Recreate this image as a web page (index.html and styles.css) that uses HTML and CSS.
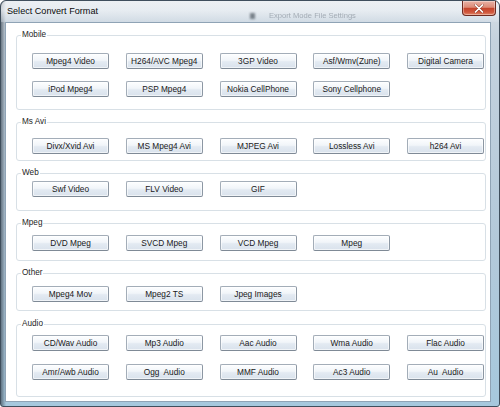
FILE: index.html
```html
<!DOCTYPE html>
<html>
<head>
<meta charset="utf-8">
<title>Select Convert Format</title>
<link rel="stylesheet" href="styles.css">
</head>
<body>
<div class="window">
  <div class="titlebar">
    <span class="title">Select Convert Format</span>
    <span class="ghost-icon"></span>
    <span class="ghost">Export Mode File Settings</span>
    <button class="close" aria-label="Close">
      <svg width="14" height="9" viewBox="0 0 14 9"><path d="M3.5 1 L10.5 8 M10.5 1 L3.5 8" stroke="#5a1c12" stroke-width="2.6" stroke-linecap="round" opacity=".5"/><path d="M3.5 1 L10.5 8 M10.5 1 L3.5 8" stroke="#ffffff" stroke-width="1.7" stroke-linecap="round"/></svg>
    </button>
  </div>
  <div class="client">
    <fieldset class="group g-mobile">
      <legend>Mobile</legend>
      <div class="grid">
        <button class="btn">Mpeg4 Video</button>
        <button class="btn">H264/AVC Mpeg4</button>
        <button class="btn">3GP Video</button>
        <button class="btn">Asf/Wmv(Zune)</button>
        <button class="btn">Digital Camera</button>
        <button class="btn">iPod Mpeg4</button>
        <button class="btn">PSP Mpeg4</button>
        <button class="btn">Nokia CellPhone</button>
        <button class="btn">Sony Cellphone</button>
      </div>
    </fieldset>
    <fieldset class="group g-msavi">
      <legend>Ms Avi</legend>
      <div class="grid">
        <button class="btn">Divx/Xvid Avi</button>
        <button class="btn">MS Mpeg4 Avi</button>
        <button class="btn">MJPEG Avi</button>
        <button class="btn">Lossless Avi</button>
        <button class="btn">h264 Avi</button>
      </div>
    </fieldset>
    <fieldset class="group g-web">
      <legend>Web</legend>
      <div class="grid">
        <button class="btn">Swf Video</button>
        <button class="btn">FLV Video</button>
        <button class="btn">GIF</button>
      </div>
    </fieldset>
    <fieldset class="group g-mpeg">
      <legend>Mpeg</legend>
      <div class="grid">
        <button class="btn">DVD Mpeg</button>
        <button class="btn">SVCD Mpeg</button>
        <button class="btn">VCD Mpeg</button>
        <button class="btn">Mpeg</button>
      </div>
    </fieldset>
    <fieldset class="group g-other">
      <legend>Other</legend>
      <div class="grid">
        <button class="btn">Mpeg4 Mov</button>
        <button class="btn">Mpeg2 TS</button>
        <button class="btn">Jpeg Images</button>
      </div>
    </fieldset>
    <fieldset class="group g-audio">
      <legend>Audio</legend>
      <div class="grid">
        <button class="btn">CD/Wav Audio</button>
        <button class="btn">Mp3 Audio</button>
        <button class="btn">Aac Audio</button>
        <button class="btn">Wma Audio</button>
        <button class="btn">Flac Audio</button>
        <button class="btn">Amr/Awb Audio</button>
        <button class="btn">Ogg&nbsp; Audio</button>
        <button class="btn">MMF Audio</button>
        <button class="btn">Ac3 Audio</button>
        <button class="btn">Au&nbsp; Audio</button>
      </div>
    </fieldset>
  </div>
</div>
</body>
</html>
```

FILE: styles.css
```css
* { box-sizing: border-box; }

html, body {
  margin: 0;
  padding: 0;
  width: 500px;
  height: 407px;
  overflow: hidden;
  background: #ffffff;
  font-family: "Liberation Sans", Arial, sans-serif;
}

.window {
  width: 500px;
  height: 407px;
  display: flex;
  flex-direction: column;
  border: 1px solid #3f4e5c;
  border-radius: 6px 6px 3px 3px;
  background:
    linear-gradient(90deg, rgba(60,72,84,.65) 0px, rgba(60,72,84,0) 5px),
    linear-gradient(180deg, #d6dde4 0px, #c4d2de 40px, #b3c9da 60%, #a6c8dd 100%);
  padding: 0 8px 4px 4px;
}

.titlebar {
  height: 21px;
  flex: none;
  display: flex;
  align-items: flex-start;
  margin: 0 -8px 0 -4px;
  padding: 0 3px 0 6px;
  background: linear-gradient(180deg, rgba(255,255,255,.55) 0, rgba(238,242,246,.75) 45%, rgba(214,224,233,.4) 100%);
  border-radius: 6px 6px 0 0;
}

.title {
  font-size: 9.1px;
  line-height: 11px;
  margin-top: 5px;
  color: #0a0a0a;
  white-space: nowrap;
}

.ghost-icon {
  width: 5px;
  height: 6px;
  margin: 12px 0 0 152px;
  background: rgba(40,50,60,.55);
  filter: blur(1px);
}

.ghost {
  font-size: 7.6px;
  line-height: 10px;
  margin: 10px 0 0 14px;
  color: rgba(50,60,75,.35);
  filter: blur(.6px);
  white-space: nowrap;
}

.close {
  margin-left: auto;
  width: 34px;
  height: 15px;
  padding: 0;
  border: 1px solid #6e2a20;
  border-top: none;
  border-radius: 0 0 4px 4px;
  background: linear-gradient(180deg, #e9b2a6 0%, #dd8a76 45%, #c6442c 52%, #d0563c 80%, #e28a6a 100%);
  display: flex;
  align-items: center;
  justify-content: center;
  box-shadow: inset 0 0 0 1px rgba(255,255,255,.35);
}

.close svg { display: block; }

.client {
  flex: 1;
  background: #ffffff;
  border: 1px solid #8fa3b5;
  padding: 7px 0 0 10px;
  display: flex;
  flex-direction: column;
  gap: 7px;
}

.group {
  width: 470px;
  margin: 0;
  padding: 0;
  border: 1px solid #d8e0e6;
  border-radius: 3px;
  min-width: 0;
}

.group legend {
  font-size: 8.2px;
  line-height: 10px;
  color: #1e1e1e;
  padding: 0 1px;
  margin-left: 4px;
}

.grid {
  display: grid;
  grid-template-columns: repeat(5, 77px);
  column-gap: 16.75px;
  row-gap: 12px;
  padding-left: 15px;
}

.g-mobile { padding-top: 13px; padding-bottom: 12px; }
.g-msavi  { padding-top: 11px; padding-bottom: 6px; }
.g-web    { padding-top: 3px;  padding-bottom: 13px; }
.g-mpeg   { padding-top: 7px;  padding-bottom: 9px; }
.g-other  { padding-top: 8px;  padding-bottom: 8px; }
.g-audio  { padding-top: 6px;  padding-bottom: 16px; margin-top: 1px; }
.g-audio .grid { row-gap: 13px; }

.btn {
  width: 77px;
  height: 16px;
  padding: 0;
  margin: 0;
  font-family: "Liberation Sans", Arial, sans-serif;
  font-size: 8.3px;
  line-height: 14px;
  color: #1a1a1a;
  white-space: nowrap;
  overflow: hidden;
  border: 1px solid #a3adb8;
  border-right-color: #8c97a3;
  border-bottom-color: #7f8a96;
  border-radius: 2px;
  background: linear-gradient(180deg, #fdfeff 0%, #f1f5f9 45%, #e3eaf2 55%, #d9e2ec 100%);
  box-shadow: inset 0 0 0 1px rgba(255,255,255,.6);
  text-align: center;
}
```
